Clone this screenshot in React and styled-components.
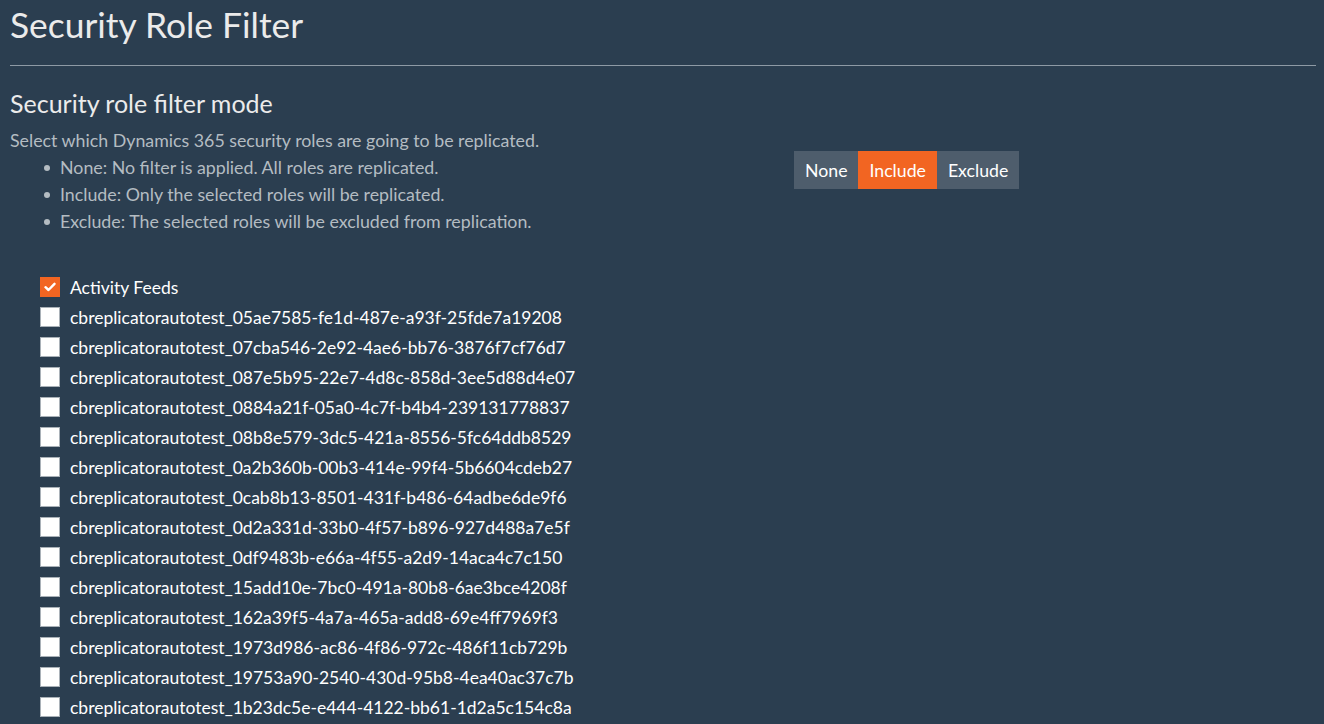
import React, { useState } from "react";
import styled, { createGlobalStyle } from "styled-components";

const Global = createGlobalStyle`
  html, body { margin: 0; padding: 0; background: #2b3e50; }
  body { font-family: Lato, "Open Sans", sans-serif; color: #ebebeb; }
  * { box-sizing: border-box; }
`;

const Page = styled.div`
  padding: 0 8px 0 10px;
  min-height: 724px;
  background: #2b3e50;
`;

const Title = styled.h1`
  margin: 0;
  padding-top: 5px;
  font-size: 35.4px;
  font-weight: 400;
  line-height: 40px;
  color: #ebebeb;
`;

const Rule = styled.hr`
  margin: 20px 0 0 0;
  border: 0;
  border-top: 1px solid #8e9aa5;
  height: 0;
`;

const SubTitle = styled.h2`
  margin: 22px 0 0 0;
  font-size: 25px;
  font-weight: 400;
  line-height: 30px;
  color: #ebebeb;
`;

const ModeRow = styled.div`
  display: grid;
  grid-template-columns: 784px auto;
  align-items: start;
`;

const Description = styled.div`
  margin-top: 9px;
  font-size: 17.8px;
  line-height: 27px;
  color: #b4bcc2;
`;

const Bullets = styled.ul`
  margin: 0;
  padding-left: 50px;
  list-style: none;
`;

const Bullet = styled.li`
  position: relative;
  &::before {
    content: "";
    position: absolute;
    left: -16px;
    top: 11px;
    width: 6px;
    height: 6px;
    border-radius: 50%;
    background: #b4bcc2;
  }
`;

const ButtonGroup = styled.div`
  display: flex;
  margin-top: 33px;
`;

const ModeButton = styled.button`
  border: 0;
  margin: 0;
  height: 38px;
  padding: 0 11px;
  font-family: Lato, sans-serif;
  font-size: 17.7px;
  color: #ffffff;
  background: ${(p) => (p.$active ? "#f26522" : "#4e5d6c")};
  cursor: pointer;
`;

const RoleList = styled.div`
  margin-top: 37px;
  padding-left: 30px;
  display: flex;
  flex-direction: column;
`;

const RoleRow = styled.label`
  display: flex;
  align-items: center;
  height: 30px;
  font-size: 17.5px;
  color: #ffffff;
  cursor: pointer;
`;

const Box = styled.span`
  width: 20px;
  height: 20px;
  margin-right: 10px;
  display: flex;
  align-items: center;
  justify-content: center;
  background: ${(p) => (p.$checked ? "#f26522" : "#ffffff")};
  border: 1px solid ${(p) => (p.$checked ? "#f26522" : "#a9b1b8")};
  flex-shrink: 0;
`;

const roles = [
  "Activity Feeds",
  "cbreplicatorautotest_05ae7585-fe1d-487e-a93f-25fde7a19208",
  "cbreplicatorautotest_07cba546-2e92-4ae6-bb76-3876f7cf76d7",
  "cbreplicatorautotest_087e5b95-22e7-4d8c-858d-3ee5d88d4e07",
  "cbreplicatorautotest_0884a21f-05a0-4c7f-b4b4-239131778837",
  "cbreplicatorautotest_08b8e579-3dc5-421a-8556-5fc64ddb8529",
  "cbreplicatorautotest_0a2b360b-00b3-414e-99f4-5b6604cdeb27",
  "cbreplicatorautotest_0cab8b13-8501-431f-b486-64adbe6de9f6",
  "cbreplicatorautotest_0d2a331d-33b0-4f57-b896-927d488a7e5f",
  "cbreplicatorautotest_0df9483b-e66a-4f55-a2d9-14aca4c7c150",
  "cbreplicatorautotest_15add10e-7bc0-491a-80b8-6ae3bce4208f",
  "cbreplicatorautotest_162a39f5-4a7a-465a-add8-69e4ff7969f3",
  "cbreplicatorautotest_1973d986-ac86-4f86-972c-486f11cb729b",
  "cbreplicatorautotest_19753a90-2540-430d-95b8-4ea40ac37c7b",
  "cbreplicatorautotest_1b23dc5e-e444-4122-bb61-1d2a5c154c8a",
];

const Check = () => (
  <svg width="12" height="10" viewBox="0 0 12 10">
    <path d="M1.5 5.2 L4.5 8 L10.5 1.8" fill="none" stroke="#fff" strokeWidth="2.4" strokeLinecap="round" strokeLinejoin="round" />
  </svg>
);

export default function App() {
  const [mode, setMode] = useState("Include");
  const [checked, setChecked] = useState({ 0: true });
  const modes = ["None", "Include", "Exclude"];
  return (
    <Page>
      <Global />
      <Title>Security Role Filter</Title>
      <Rule />
      <SubTitle>Security role filter mode</SubTitle>
      <ModeRow>
        <Description>
          Select which Dynamics 365 security roles are going to be replicated.
          <Bullets>
            <Bullet>None: No filter is applied. All roles are replicated.</Bullet>
            <Bullet>Include: Only the selected roles will be replicated.</Bullet>
            <Bullet>Exclude: The selected roles will be excluded from replication.</Bullet>
          </Bullets>
        </Description>
        <ButtonGroup>
          {modes.map((m) => (
            <ModeButton key={m} $active={mode === m} onClick={() => setMode(m)}>
              {m}
            </ModeButton>
          ))}
        </ButtonGroup>
      </ModeRow>
      <RoleList>
        {roles.map((r, i) => (
          <RoleRow key={r} onClick={() => setChecked((c) => ({ ...c, [i]: !c[i] }))}>
            <Box $checked={!!checked[i]}>{checked[i] && <Check />}</Box>
            {r}
          </RoleRow>
        ))}
      </RoleList>
    </Page>
  );
}
